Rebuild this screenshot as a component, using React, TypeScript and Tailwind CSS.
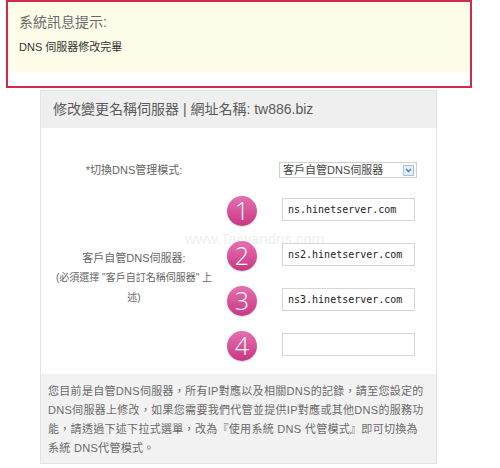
import React from 'react';

const servers = ['ns.hinetserver.com', 'ns2.hinetserver.com', 'ns3.hinetserver.com', ''];

const font = { fontFamily: '"Liberation Sans", "Noto Sans CJK TC", sans-serif' };

const NumberBadge: React.FC<{ n: number }> = ({ n }) => (
  <div className="w-[30px] h-[30px] rounded-full bg-gradient-to-b from-[#e66fb1] to-[#c93582] flex items-center justify-center shadow-[0_1px_1px_rgba(0,0,0,0.15)]">
    <span className="text-white text-[25px] leading-none font-light" style={{ fontFamily: '"Open Sans", sans-serif' }}>
      {n}
    </span>
  </div>
);

const App: React.FC = () => {
  return (
    <div className="w-[500px] h-[468px] bg-white overflow-hidden" style={font}>
      <div className="ml-[6px] w-[466px] h-[88px] border-2 border-[#d12a4b]">
        <div className="bg-[#fefde9] h-[70px] px-[11px] pt-[10px]">
          <div className="text-[14px] leading-[20px] text-[#6a6a6a]">系統訊息提示:</div>
          <div className="mt-[7px] text-[11px] leading-[16px] text-[#333]">DNS 伺服器修改完畢</div>
        </div>
      </div>

      <div className="ml-[40px] mt-[2px] w-[397px] border border-[#e3e3e3]">
        <div className="h-[37px] bg-[#efefef] flex items-center pl-[12px] text-[14px] text-[#5a5a5a]">
          修改變更名稱伺服器 | 網址名稱: tw886.biz
        </div>

        <div className="relative bg-white pt-[32px] pb-[7px] pl-[13px]">
          <div className="absolute left-[144px] top-[101px] text-[15px] text-[#efefef] leading-[20px]">
            www.Taiwandns.com
          </div>

          <div className="relative flex items-center h-[20px]">
            <div className="w-[160px] text-center text-[11px] text-[#666]">*切換DNS管理模式:</div>
            <div className="ml-[65px] w-[138px] h-[16px] border border-[#cfcfcf] bg-white flex items-center justify-between pl-[3px] pr-[2px]">
              <span className="text-[11px] text-[#444] leading-none">客戶自管DNS伺服器</span>
              <span className="w-[11px] h-[11px] border border-[#a9c3e6] bg-[#e4eefb] flex items-center justify-center">
                <svg width="7" height="5" viewBox="0 0 7 5">
                  <path d="M1 1 L3.5 3.5 L6 1" fill="none" stroke="#4a78c2" strokeWidth="1.3" />
                </svg>
              </span>
            </div>
          </div>

          <div className="relative flex mt-[7px]">
            <div className="w-[160px] flex flex-col items-center justify-center text-center text-[#666] pt-[1px]">
              <div className="text-[11px] leading-[20px]">客戶自管DNS伺服器:</div>
              <div className="text-[10px] leading-[20px] px-[2px]">(必須選擇 "客戶自訂名稱伺服器" 上述)</div>
            </div>
            <div className="ml-[13px] flex flex-col">
              {servers.map((s, i) => (
                <div key={i} className="h-[45px] flex items-center">
                  <div className="pt-[2px]">
                    <NumberBadge n={i + 1} />
                  </div>
                  <div className="ml-[25px] w-[133px] h-[23px] border border-[#d6d6d6] bg-white flex items-center pl-[5px] text-[10px] text-[#222]" style={{ fontFamily: '"DejaVu Sans Mono", monospace' }}>
                    {s}
                  </div>
                </div>
              ))}
            </div>
          </div>
        </div>

        <div className="bg-[#f2f2f2] pl-[7px] pr-[6px] pt-[8px] pb-[5px] text-[11px] leading-[19px] tracking-[0.3px] text-[#6a6a6a] whitespace-nowrap">
          您目前是自管DNS伺服器，所有IP對應以及相關DNS的記錄，請至您設定的
          <br />
          DNS伺服器上修改，如果您需要我們代管並提供IP對應或其他DNS的服務功
          <br />
          能，請透過下述下拉式選單，改為『使用系統 DNS 代管模式』即可切換為
          <br />
          系統 DNS代管模式。
        </div>
      </div>
    </div>
  );
};

export default App;
